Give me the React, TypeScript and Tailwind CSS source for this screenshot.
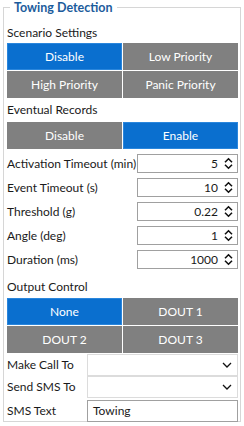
import type { ReactNode } from "react";

const BLUE = "bg-[#0a6fcf] border border-[#2a86dc]";
const GRAY = "bg-[#808080] border border-[#808080]";

function ToggleButton({ label, active }: { label: string; active?: boolean }) {
  return (
    <div
      className={`flex h-[27px] items-center justify-center text-white ${
        active ? BLUE : GRAY
      }`}
    >
      {label}
    </div>
  );
}

function SectionLabel({ children, className = "" }: { children: ReactNode; className?: string }) {
  return <div className={`h-[18px] leading-[18px] ${className}`}>{children}</div>;
}

function SpinArrows() {
  return (
    <svg width="9" height="13" viewBox="0 0 9 13" fill="none" stroke="#111" strokeWidth="1.6">
      <path d="M1 5.2 L4.5 1.8 L8 5.2" />
      <path d="M1 7.8 L4.5 11.2 L8 7.8" />
    </svg>
  );
}

function SpinRow({ label, value }: { label: string; value: string }) {
  return (
    <div className="flex h-[24px] items-start">
      <div className="w-[130px] leading-[19px] whitespace-nowrap">{label}</div>
      <div className="flex h-[19px] flex-1 items-center justify-end border border-[#a0a0a0] pr-[4px]">
        <span className="mr-[6px]">{value}</span>
        <SpinArrows />
      </div>
    </div>
  );
}

function ComboRow({ label }: { label: string }) {
  return (
    <div className="flex h-[22px] items-center">
      <div className="w-[80px] whitespace-nowrap">{label}</div>
      <div className="flex h-full flex-1 items-center justify-end border border-[#dcdcdc] pr-[5px]">
        <svg width="10" height="6" viewBox="0 0 10 6" fill="none" stroke="#111" strokeWidth="1.3">
          <path d="M1 1 L5 5 L9 1" />
        </svg>
      </div>
    </div>
  );
}

export default function App() {
  return (
    <div className="relative h-[426px] w-[244px] bg-white text-[12px] text-[#1a1a1a] [font-family:Lato,'Noto_Sans',sans-serif]">
      <div className="absolute left-[10px] top-0 bg-white px-[4px] text-[12.5px] font-bold leading-[15px] text-[#1c5c9c]">
        Towing Detection
      </div>
      <div className="ml-[3px] mt-[7px] inline-block h-[415px] w-[238px] border border-[#d6d6d6] pl-[3px] pr-[2px]">
        <SectionLabel className="mt-[16px]">Scenario Settings</SectionLabel>
        <div className="mt-[1px] grid grid-cols-2 gap-px">
          <ToggleButton label="Disable" active />
          <ToggleButton label="Low Priority" />
          <ToggleButton label="High Priority" />
          <ToggleButton label="Panic Priority" />
        </div>
        <SectionLabel className="mt-[3px]">Eventual Records</SectionLabel>
        <div className="mt-[3px] grid grid-cols-2 gap-px">
          <ToggleButton label="Disable" />
          <ToggleButton label="Enable" active />
        </div>
        <div className="mt-[5px]">
          <SpinRow label="Activation Timeout (min)" value="5" />
          <SpinRow label="Event Timeout (s)" value="10" />
          <SpinRow label="Threshold (g)" value="0.22" />
          <SpinRow label="Angle (deg)" value="1" />
          <SpinRow label="Duration (ms)" value="1000" />
        </div>
        <SectionLabel className="mt-[4px]">Output Control</SectionLabel>
        <div className="mt-[2px] grid grid-cols-2 gap-px">
          <ToggleButton label="None" active />
          <ToggleButton label="DOUT 1" />
          <ToggleButton label="DOUT 2" />
          <ToggleButton label="DOUT 3" />
        </div>
        <div className="mt-[1px]">
          <ComboRow label="Make Call To" />
          <ComboRow label="Send SMS To" />
          <div className="mt-[2px] flex h-[22px] items-center">
            <div className="w-[80px]">SMS Text</div>
            <div className="flex h-full flex-1 items-center border border-[#a0a0a0] pl-[5px]">Towing</div>
          </div>
        </div>
      </div>
    </div>
  );
}
